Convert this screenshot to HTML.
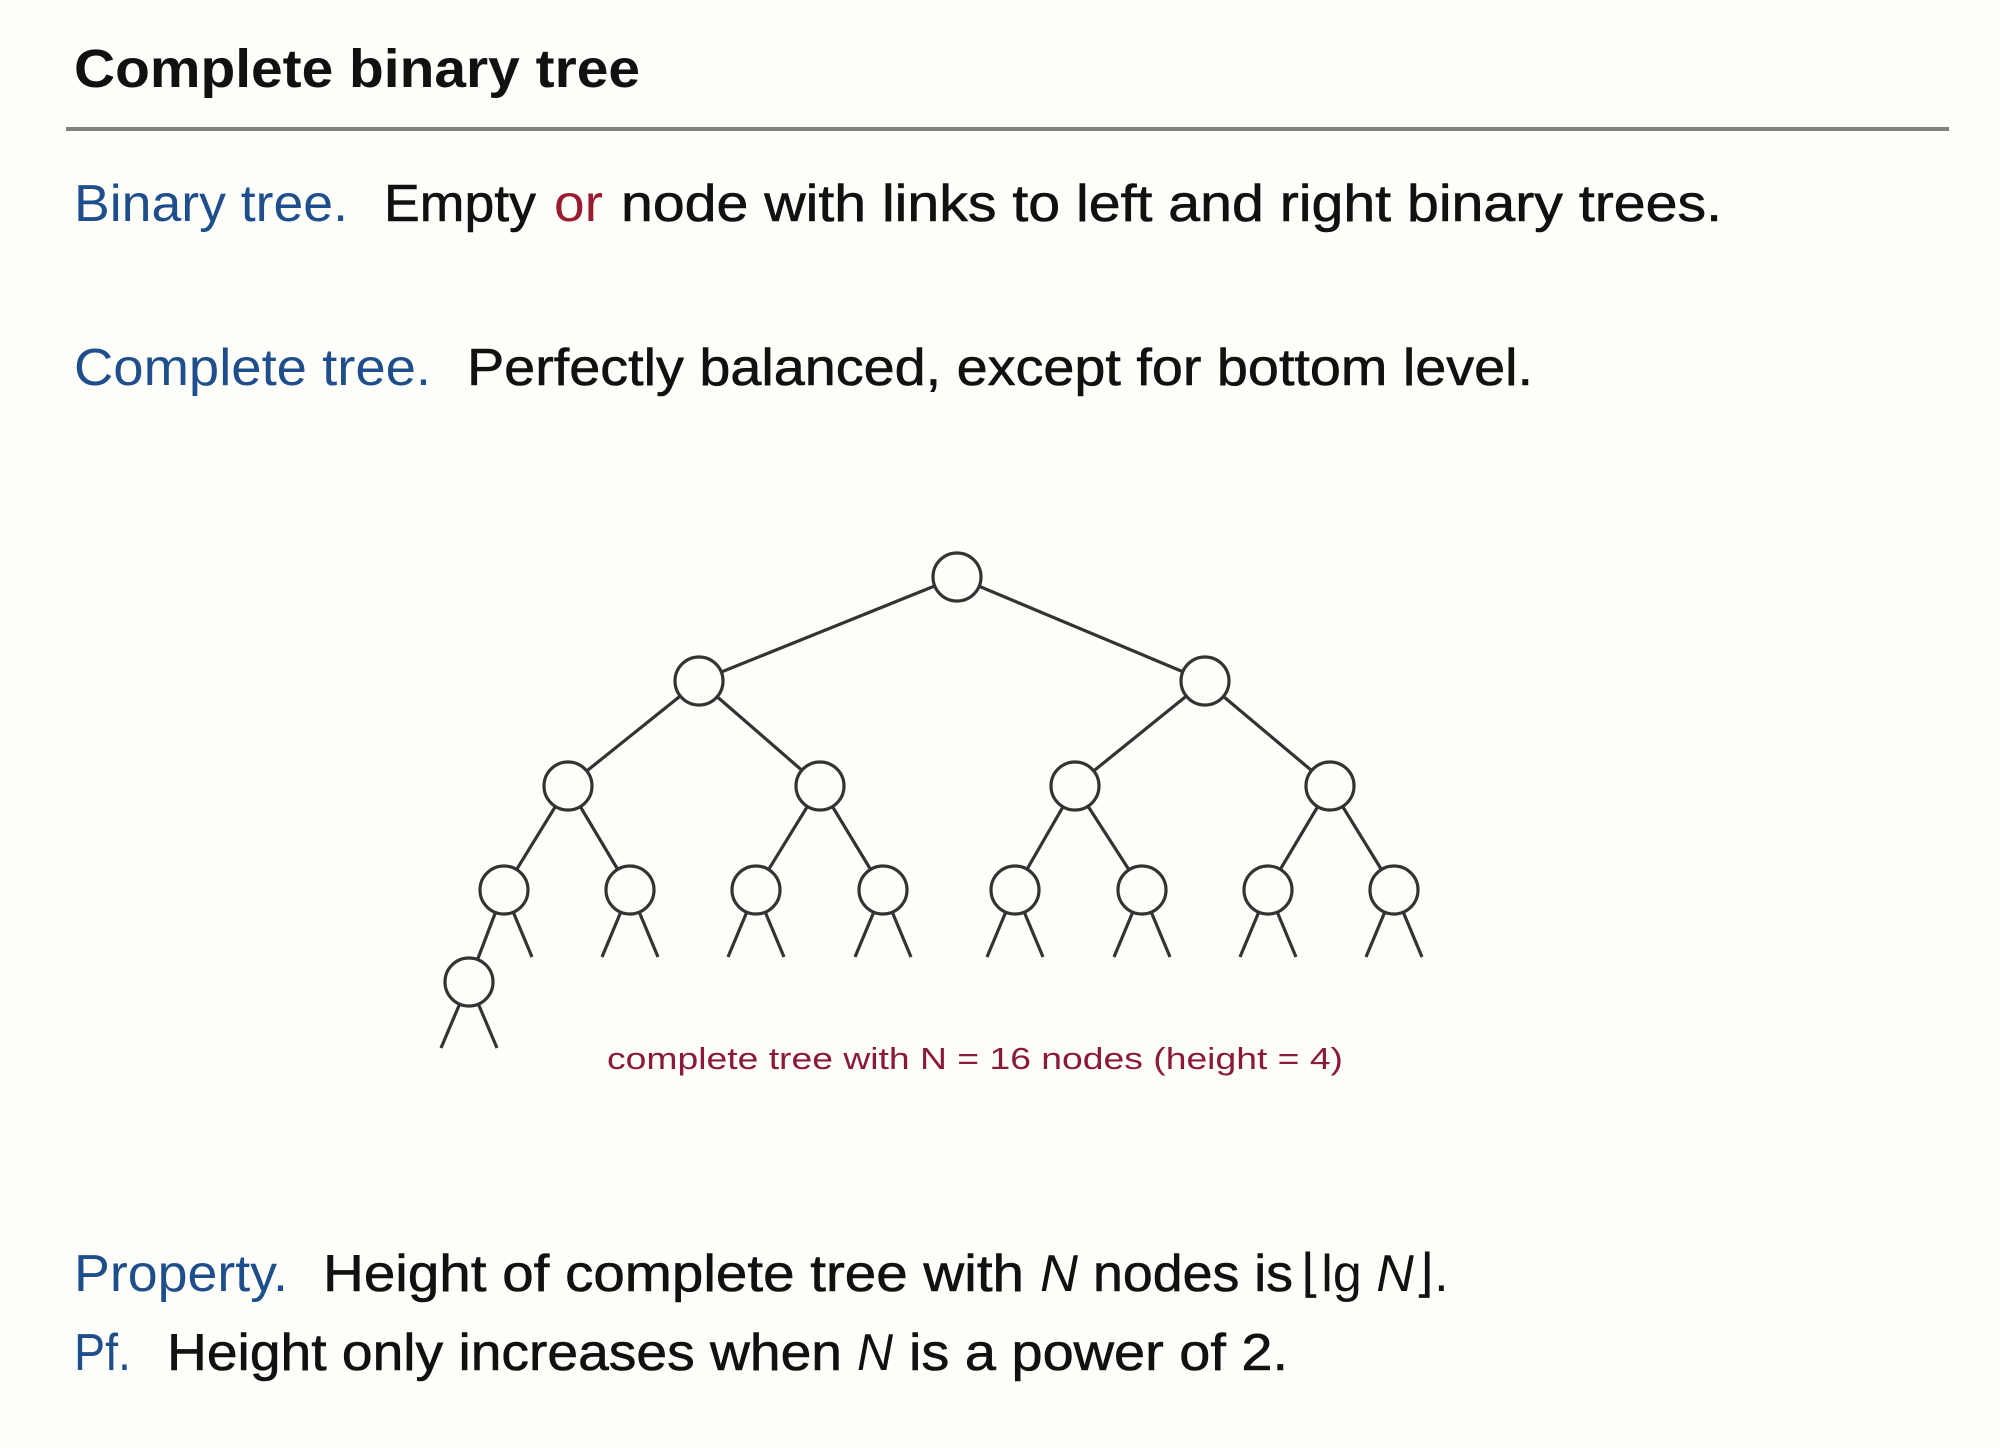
<!DOCTYPE html>
<html><head><meta charset="utf-8"><style>
html,body{margin:0;padding:0;background:#fdfdf9;}
svg{display:block}
text{font-family:"Liberation Sans",sans-serif;}
</style></head><body>
<svg width="2000" height="1448" viewBox="0 0 2000 1448" xmlns="http://www.w3.org/2000/svg">
<rect width="2000" height="1448" fill="#fdfdf9"/>
<text x="74" y="87" font-size="54" font-weight="bold" fill="#111" textLength="566" lengthAdjust="spacingAndGlyphs">Complete binary tree</text>
<rect x="66" y="127" width="1883" height="4" fill="#808080"/>
<g font-size="52" stroke-width="0.6">
<text x="74" y="221" fill="#1f4e8c" textLength="274" lengthAdjust="spacingAndGlyphs">Binary tree.</text>
<text x="384" y="221" fill="#111" stroke="#111" textLength="152" lengthAdjust="spacingAndGlyphs">Empty</text>
<text x="554" y="221" fill="#9b1b30" textLength="49" lengthAdjust="spacingAndGlyphs">or</text>
<text x="621" y="221" fill="#111" stroke="#111" textLength="1101" lengthAdjust="spacingAndGlyphs">node with links to left and right binary trees.</text>
<text x="74" y="385" fill="#1f4e8c" textLength="357" lengthAdjust="spacingAndGlyphs">Complete tree.</text>
<text x="467" y="385" fill="#111" stroke="#111" textLength="1066" lengthAdjust="spacingAndGlyphs">Perfectly balanced, except for bottom level.</text>
<text x="74" y="1291" fill="#1f4e8c" textLength="214" lengthAdjust="spacingAndGlyphs">Property.</text>
<text x="323" y="1291" fill="#111" stroke="#111" textLength="701" lengthAdjust="spacingAndGlyphs">Height of complete tree with</text>
<text x="1040" y="1291" fill="#111" font-family="Liberation Serif" font-style="italic" textLength="38" lengthAdjust="spacingAndGlyphs">N</text>
<text x="1093" y="1291" fill="#111" stroke="#111" textLength="200" lengthAdjust="spacingAndGlyphs">nodes is</text>
<text x="1301" y="1291" fill="#111" font-family="Liberation Serif">⌊lg <tspan font-style="italic">N</tspan>⌋<tspan font-family="Liberation Sans">.</tspan></text>
<text x="74" y="1370" fill="#1f4e8c" textLength="57" lengthAdjust="spacingAndGlyphs">Pf.</text>
<text x="167" y="1370" fill="#111" stroke="#111" textLength="675" lengthAdjust="spacingAndGlyphs">Height only increases when</text>
<text x="857" y="1370" fill="#111" font-family="Liberation Serif" font-style="italic" textLength="36" lengthAdjust="spacingAndGlyphs">N</text>
<text x="909" y="1370" fill="#111" stroke="#111" textLength="379" lengthAdjust="spacingAndGlyphs">is a power of 2.</text>
</g>
<text x="607" y="1069" font-size="31" fill="#8b1a3a" textLength="736" lengthAdjust="spacingAndGlyphs">complete tree with N = 16 nodes (height = 4)</text>
<g stroke="#333" stroke-width="3.2" fill="none">
<line x1="957" y1="577" x2="699" y2="681"/><line x1="957" y1="577" x2="1205" y2="681"/>
<line x1="699" y1="681" x2="568" y2="786"/><line x1="699" y1="681" x2="820" y2="786"/>
<line x1="1205" y1="681" x2="1075" y2="786"/><line x1="1205" y1="681" x2="1330" y2="786"/>
<line x1="568" y1="786" x2="504" y2="890"/><line x1="568" y1="786" x2="630" y2="890"/>
<line x1="820" y1="786" x2="756" y2="890"/><line x1="820" y1="786" x2="883" y2="890"/>
<line x1="1075" y1="786" x2="1015" y2="890"/><line x1="1075" y1="786" x2="1142" y2="890"/>
<line x1="1330" y1="786" x2="1268" y2="890"/><line x1="1330" y1="786" x2="1394" y2="890"/>
<line x1="504" y1="890" x2="469" y2="982"/><line x1="504" y1="890" x2="532" y2="957"/>
<path d="M630 890 L602 957 M630 890 L658 957 M756 890 L728 957 M756 890 L784 957 M883 890 L855 957 M883 890 L911 957 M1015 890 L987 957 M1015 890 L1043 957 M1142 890 L1114 957 M1142 890 L1170 957 M1268 890 L1240 957 M1268 890 L1296 957 M1394 890 L1366 957 M1394 890 L1422 957 M469 982 L441 1048 M469 982 L497 1048"/>
<g fill="#fdfdf9">
<circle cx="957" cy="577" r="24"/>
<circle cx="699" cy="681" r="24"/><circle cx="1205" cy="681" r="24"/>
<circle cx="568" cy="786" r="24"/><circle cx="820" cy="786" r="24"/><circle cx="1075" cy="786" r="24"/><circle cx="1330" cy="786" r="24"/>
<circle cx="504" cy="890" r="24"/><circle cx="630" cy="890" r="24"/><circle cx="756" cy="890" r="24"/><circle cx="883" cy="890" r="24"/>
<circle cx="1015" cy="890" r="24"/><circle cx="1142" cy="890" r="24"/><circle cx="1268" cy="890" r="24"/><circle cx="1394" cy="890" r="24"/>
<circle cx="469" cy="982" r="24"/>
</g>
</g>
</svg>
</body></html>
